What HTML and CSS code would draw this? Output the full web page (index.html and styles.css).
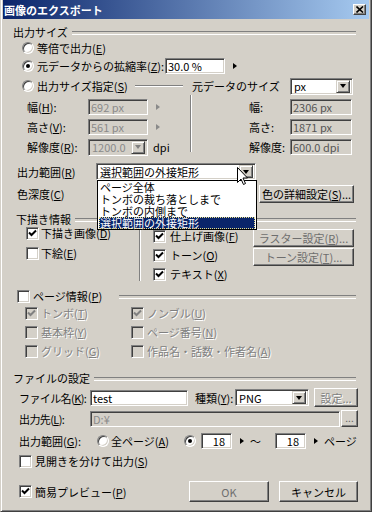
FILE: index.html
```html
<!DOCTYPE html>
<html lang="ja">
<head>
    <meta charset="UTF-8">
    <title>画像のエクスポート</title>
    <link rel="stylesheet" href="styles.css">
</head>
<body>

<div class="window">
    <div class="titlebar">
        <span class="title">画像のエクスポート</span>
        <span class="close">
            <svg width="8" height="7" viewBox="0 0 8 7"><path d="M0.5 0.5 L7 6.5 M7 0.5 L0.5 6.5" stroke="#000" stroke-width="1.6" fill="none"/></svg>
        </span>
    </div>

    <div class="body">
        <!-- 出力サイズ -->
        <div class="group-head head-size">出力サイズ</div>
        <div class="opt opt-equal"><span class="radio"></span><span>等倍で出力(<u>E</u>)</span></div>
        <div class="opt opt-scale">
            <span class="radio on"></span><span class="scale-text">元データからの拡縮率(<u>Z</u>):</span>
            <span class="edit scale-edit">30.0 %</span><span class="spin"></span>
        </div>
        <div class="opt opt-fixed">
            <span class="radio"></span><span class="fixed-text">出力サイズ指定(<u>S</u>)</span>
            <span class="rule"></span>
            <span class="src-label">元データのサイズ</span>
            <span class="combo unit-combo"><span class="combo-text">px</span><span class="drop"></span></span>
        </div>

        <div class="size-cols">
            <div class="size-left">
                <div class="field"><span class="flabel">幅(<u>H</u>):</span><span class="edit off size-edit">692 px</span><span class="spin off"></span></div>
                <div class="field"><span class="flabel">高さ(<u>V</u>):</span><span class="edit off size-edit">561 px</span><span class="spin off"></span></div>
                <div class="field"><span class="flabel">解像度(<u>R</u>):</span><span class="combo off size-edit"><span class="combo-text">1200.0</span><span class="drop off"></span></span><span class="dpi">dpi</span></div>
            </div>
            <div class="vsep size-sep"></div>
            <div class="size-right">
                <div class="field"><span class="rlabel">幅:</span><span class="edit ro src-edit">2306 px</span></div>
                <div class="field"><span class="rlabel">高さ:</span><span class="edit ro src-edit">1871 px</span></div>
                <div class="field"><span class="rlabel">解像度:</span><span class="edit ro src-edit">600.0 dpi</span></div>
            </div>
        </div>

        <!-- 出力範囲 / 色深度 -->
        <div class="line-row range-row">
            <span class="range-label">出力範囲(<u>R</u>)</span>
            <span class="combo range-combo">
                <span class="combo-text">選択範囲の外接矩形</span><span class="drop"></span>
                <span class="droplist">
                    <span class="item">ページ全体</span>
                    <span class="item">トンボの裁ち落としまで</span>
                    <span class="item">トンボの内側まで</span>
                    <span class="item selected">選択範囲の外接矩形</span>
                </span>
                <svg class="cursor" width="12" height="19" viewBox="0 0 12 19"><path d="M0.5 0.5 L0.5 15.5 L4 12 L6.5 17.5 L8.5 16.5 L6 11 L10.5 11 Z" fill="#fff" stroke="#000" stroke-width="1"/></svg>
            </span>
        </div>
        <div class="line-row depth-row">
            <span class="depth-label">色深度(<u>C</u>)</span>
            <span class="btn color-btn">色の詳細設定(<u>S</u>)...</span>
        </div>

        <!-- 下描き情報 -->
        <div class="group-head head-draft">下描き情報</div>
        <div class="draft-cols">
            <div class="draft-left">
                <div class="chk-row"><span class="check on"><svg viewBox="0 0 9 9"><path d="M1 3.5 L3.5 6 L8 1.5"/></svg></span><span>下描き画像(<u>D</u>)</span></div>
                <div class="chk-row"><span class="check"></span><span>下絵(<u>E</u>)</span></div>
            </div>
            <div class="vsep draft-sep"></div>
            <div class="draft-right">
                <div class="draft-checks">
                    <div class="chk-row"><span class="check on"><svg viewBox="0 0 9 9"><path d="M1 3.5 L3.5 6 L8 1.5"/></svg></span><span>仕上げ画像(<u>F</u>)</span></div>
                    <div class="chk-row"><span class="check on"><svg viewBox="0 0 9 9"><path d="M1 3.5 L3.5 6 L8 1.5"/></svg></span><span>トーン(<u>O</u>)</span></div>
                    <div class="chk-row"><span class="check on"><svg viewBox="0 0 9 9"><path d="M1 3.5 L3.5 6 L8 1.5"/></svg></span><span>テキスト(<u>X</u>)</span></div>
                </div>
                <div class="draft-btns">
                    <span class="btn side-btn dim">ラスター設定(<u>R</u>)...</span>
                    <span class="btn side-btn dim">トーン設定(<u>T</u>)...</span>
                </div>
            </div>
        </div>

        <!-- ページ情報 -->
        <div class="chk-row page-head"><span class="check"></span><span>ページ情報(<u>P</u>)</span></div>
        <div class="page-grid">
            <div class="chk-row off"><span class="check on off"><svg viewBox="0 0 9 9"><path d="M1 3.5 L3.5 6 L8 1.5"/></svg></span><span>トンボ(<u>T</u>)</span></div>
            <div class="chk-row off"><span class="check on off"><svg viewBox="0 0 9 9"><path d="M1 3.5 L3.5 6 L8 1.5"/></svg></span><span>ノンブル(<u>U</u>)</span></div>
            <div class="chk-row off"><span class="check off"></span><span>基本枠(<u>Y</u>)</span></div>
            <div class="chk-row off"><span class="check off"></span><span>ページ番号(<u>N</u>)</span></div>
            <div class="chk-row off"><span class="check off"></span><span>グリッド(<u>G</u>)</span></div>
            <div class="chk-row off"><span class="check off"></span><span>作品名・話数・作者名(<u>A</u>)</span></div>
        </div>

        <!-- ファイルの設定 -->
        <div class="group-head head-file">ファイルの設定</div>
        <div class="line-row file-row">
            <span class="file-label">ファイル名(<u>K</u>):</span>
            <span class="edit name-edit">test</span>
            <span class="kind-label">種類(<u>Y</u>):</span>
            <span class="combo kind-combo"><span class="combo-text">PNG</span><span class="drop"></span></span>
            <span class="btn set-btn">設定...</span>
        </div>
        <div class="line-row dest-row">
            <span class="file-label">出力先(<u>L</u>):</span>
            <span class="edit off dest-edit">D:¥</span>
            <span class="btn browse-btn">...</span>
        </div>
        <div class="line-row pages-row">
            <span class="pages-label">出力範囲(<u>G</u>):</span>
            <span class="radio"></span><span class="all-label">全ページ(<u>A</u>)</span>
            <span class="radio on"></span>
            <span class="edit page-edit">18</span><span class="spin"></span>
            <span class="tilde">～</span>
            <span class="edit page-edit">18</span><span class="spin"></span>
            <span class="page-unit">ページ</span>
        </div>
        <div class="chk-row spread-row"><span class="check"></span><span>見開きを分けて出力(<u>S</u>)</span></div>
        <div class="line-row bottom-row">
            <div class="chk-row preview"><span class="check on"><svg viewBox="0 0 9 9"><path d="M1 3.5 L3.5 6 L8 1.5"/></svg></span><span>簡易プレビュー(<u>P</u>)</span></div>
            <span class="btn ok-btn dim">OK</span>
            <span class="btn cancel-btn">キャンセル</span>
        </div>
    </div>
</div>

</body>
</html>
```

FILE: styles.css
```css
* {
    box-sizing: border-box;
}
body {
    margin: 0;
    background-color: #d4d0c8;
    font-family: "Noto Sans CJK JP", "Noto Sans", sans-serif;
    font-size: 11px;
    line-height: 14px;
    color: #000;
    white-space: nowrap;
}
u {
    text-underline-offset: 1px;
}

/* window frame */
.window {
    width: 372px;
    height: 512px;
    background-color: #d4d0c8;
    border: 1px solid;
    border-color: #d4d0c8 #404040 #404040 #d4d0c8;
    border-top: 0;
    box-shadow: inset 1px 0 #fff, inset -1px -1px #808080;
    padding: 0 2px 2px 2px;
}
.titlebar {
    height: 19px;
    display: flex;
    align-items: center;
    justify-content: space-between;
    padding: 0 3px 0 1px;
    background: linear-gradient(to right, #0a246a, #a6caf0);
    color: #fff;
    font-weight: bold;
}
.close {
    width: 13px;
    height: 11px;
    display: flex;
    align-items: center;
    justify-content: center;
    background-color: #d4d0c8;
    border: 1px solid;
    border-color: #fff #404040 #404040 #fff;
    box-shadow: inset -1px -1px #808080;
}
.body {
    padding: 0 11px 0 10px;
    position: relative;
}

/* common controls */
.group-head {
    display: flex;
    align-items: center;
    height: 14px;
}
.group-head::after {
    content: "";
    flex: 1;
    height: 2px;
    border-top: 1px solid #808080;
    border-bottom: 1px solid #fff;
    margin: 1px 2px 0 4px;
}
.radio {
    position: relative;
    flex: none;
    width: 12px;
    height: 12px;
    border-radius: 50%;
    background: #fff;
    border: 1px solid;
    border-color: #808080 #fff #fff #808080;
    box-shadow: inset 1px 1px #404040, inset -1px -1px #d4d0c8;
}
.radio.on::after {
    content: "";
    position: absolute;
    left: 3px;
    top: 3px;
    width: 4px;
    height: 4px;
    border-radius: 50%;
    background: #000;
}
.check {
    flex: none;
    width: 13px;
    height: 13px;
    background: #fff;
    border: 1px solid;
    border-color: #808080 #fff #fff #808080;
    box-shadow: inset 1px 1px #404040, inset -1px -1px #d4d0c8;
    display: flex;
    align-items: center;
    justify-content: center;
}
.check svg {
    width: 9px;
    height: 9px;
    fill: none;
    stroke: #000;
    stroke-width: 2;
}
.check.off {
    background: #d4d0c8;
}
.check.off svg {
    stroke: #808080;
}
.edit {
    flex: none;
    height: 16px;
    background: #fff;
    border: 1px solid;
    border-color: #808080 #fff #fff #808080;
    box-shadow: inset 1px 1px #404040, inset -1px -1px #d4d0c8;
    padding: 0 2px;
    line-height: 14px;
    overflow: hidden;
}
.edit.off {
    background: #d4d0c8;
    color: #8a8a8a;
}
.edit.ro {
    background: #d4d0c8;
    color: #555;
}
.combo {
    position: relative;
    flex: none;
    display: flex;
    align-items: center;
    height: 17px;
    background: #fff;
    border: 1px solid;
    border-color: #808080 #fff #fff #808080;
    box-shadow: inset 1px 1px #404040, inset -1px -1px #d4d0c8;
    padding: 2px;
}
.combo.off {
    background: #d4d0c8;
    color: #8a8a8a;
}
.combo-text {
    flex: 1;
    padding-left: 1px;
    overflow: hidden;
}
.drop {
    flex: none;
    width: 14px;
    height: 13px;
    background: #d4d0c8;
    border: 1px solid;
    border-color: #d4d0c8 #404040 #404040 #d4d0c8;
    box-shadow: inset 1px 1px #fff, inset -1px -1px #808080;
    display: flex;
    align-items: center;
    justify-content: center;
}
.drop::after {
    content: "";
    border-top: 4px solid #000;
    border-left: 3.5px solid transparent;
    border-right: 3.5px solid transparent;
}
.drop.off::after {
    border-top-color: #808080;
}
.spin {
    flex: none;
    width: 0;
    height: 0;
    border-left: 4px solid #000;
    border-top: 3.5px solid transparent;
    border-bottom: 3.5px solid transparent;
}
.spin.off {
    border-left-color: #8a8a8a;
}
.btn {
    flex: none;
    display: flex;
    align-items: center;
    justify-content: center;
    background: #d4d0c8;
    border: 1px solid;
    border-color: #fff #404040 #404040 #fff;
    box-shadow: inset -1px -1px #808080;
}
.btn.dim {
    color: #6e6e6e;
}
.vsep {
    flex: none;
    width: 2px;
    border-left: 1px solid #808080;
    border-right: 1px solid #fff;
}
.opt,
.line-row,
.field,
.chk-row {
    display: flex;
    align-items: center;
}
.chk-row {
    height: 14px;
}
.chk-row .check {
    margin-right: 3px;
}
.chk-row.off {
    color: #808080;
    text-shadow: 1px 1px 0 #fff;
}

/* 出力サイズ */
.head-size {
    margin-top: 6px;
}
.opt {
    height: 16px;
    padding-left: 9px;
}
.opt .radio {
    margin-right: 3px;
}
.opt-equal {
    margin-top: 1px;
}
.opt-scale {
    margin-top: 2px;
}
.scale-text {
    width: 128px;
}
.scale-edit {
    width: 60px;
    margin-right: 8px;
}
.opt-fixed {
    margin-top: 4px;
}
.fixed-text {
    width: 98px;
}
.rule {
    width: 48px;
    height: 2px;
    border-top: 1px solid #808080;
    border-bottom: 1px solid #fff;
    margin-right: 9px;
}
.src-label {
    width: 98px;
}
.unit-combo {
    width: 63px;
}
.size-cols {
    display: flex;
    height: 62px;
}
.size-left {
    width: 177px;
    padding: 5px 0 0 14px;
}
.size-sep {
    height: 57px;
    margin-top: 1px;
}
.size-right {
    padding: 5px 0 0 57px;
}
.field {
    height: 16px;
    margin-bottom: 4px;
}
.flabel {
    width: 61px;
}
.size-edit {
    width: 60px;
    margin-right: 8px;
}
.dpi {
    margin-left: -3px;
}
.rlabel {
    width: 41px;
}
.src-edit {
    width: 62px;
}

/* 出力範囲 / 色深度 */
.range-row {
    margin-top: 7px;
    padding-left: 4px;
    position: relative;
    z-index: 2;
}
.range-label {
    width: 79px;
}
.range-combo {
    width: 160px;
}
.droplist {
    position: absolute;
    left: 0;
    top: 16px;
    width: 160px;
    background: #fff;
    border: 1px solid #000;
    display: flex;
    flex-direction: column;
    padding: 0 1px;
}
.item {
    height: 12px;
    line-height: 12px;
    padding-left: 1px;
}
.item.selected {
    background: #0a246a;
    color: #fff;
    outline: 1px dotted #e8e08a;
    outline-offset: -1px;
}
.cursor {
    position: absolute;
    left: 140px;
    top: 3px;
}
.depth-row {
    margin-top: 5px;
    height: 18px;
    padding-left: 4px;
}
.depth-label {
    width: 242px;
}
.color-btn {
    width: 95px;
    height: 18px;
}

/* 下描き情報 */
.head-draft {
    margin-top: 9px;
    padding-left: 3px;
}
.draft-cols {
    display: flex;
}
.draft-left {
    width: 126px;
    padding: 0 0 0 13px;
}
.draft-left .chk-row {
    margin-bottom: 6px;
}
.draft-left .check {
    margin-right: 2px;
}
.draft-sep {
    height: 55px;
}
.draft-right {
    display: flex;
    padding: 3px 0 0 12px;
}
.draft-checks {
    width: 100px;
}
.draft-checks .chk-row {
    margin-bottom: 5px;
}
.draft-checks .check {
    margin-right: 4px;
}
.draft-btns {
    display: flex;
    flex-direction: column;
    gap: 1px;
}
.side-btn {
    width: 101px;
    height: 18px;
}

/* ページ情報 */
.page-head {
    margin-top: 3px;
    padding-left: 4px;
}
.page-head::after {
    content: "";
    flex: 1;
    height: 2px;
    border-top: 1px solid #808080;
    border-bottom: 1px solid #fff;
    margin: 2px 2px 0 17px;
}
.page-grid {
    display: grid;
    grid-template-columns: 106px 1fr;
    row-gap: 5px;
    margin-top: 3px;
    padding-left: 12px;
}

/* ファイルの設定 */
.head-file {
    margin-top: 13px;
}
.file-row {
    margin-top: 3px;
    height: 19px;
    padding-left: 6px;
}
.file-label {
    width: 71px;
    letter-spacing: -0.6px;
}
.name-edit {
    width: 98px;
}
.kind-label {
    width: 40px;
    margin-left: 7px;
}
.kind-combo {
    width: 74px;
}
.set-btn {
    width: 44px;
    height: 19px;
    margin-left: 5px;
    color: #808080;
    text-shadow: 1px 1px 0 #fff;
}
.dest-row {
    margin-top: 3px;
    height: 17px;
    padding-left: 6px;
}
.dest-edit {
    width: 250px;
    color: #000;
}
.browse-btn {
    width: 17px;
    height: 17px;
    margin-left: 1px;
    color: #606060;
    font-size: 10px;
    line-height: 10px;
    align-items: flex-end;
    padding-bottom: 3px;
}
.pages-row {
    margin-top: 6px;
    height: 16px;
    padding-left: 6px;
}
.pages-label {
    width: 78px;
}
.all-label {
    width: 73px;
    margin-left: 2px;
}
.page-edit {
    width: 31px;
    text-align: right;
    padding-right: 6px;
    margin-left: 5px;
    margin-right: 8px;
}
.tilde {
    width: 26px;
    padding-left: 6px;
}
.page-unit {
    margin-left: 6px;
}
.spread-row {
    margin-top: 5px;
    padding-left: 6px;
}
.bottom-row {
    margin-top: 13px;
    height: 21px;
}
.preview {
    width: 176px;
    padding-left: 6px;
}
.ok-btn {
    width: 80px;
    height: 21px;
}
.cancel-btn {
    width: 79px;
    height: 21px;
    margin-left: 10px;
}
```
